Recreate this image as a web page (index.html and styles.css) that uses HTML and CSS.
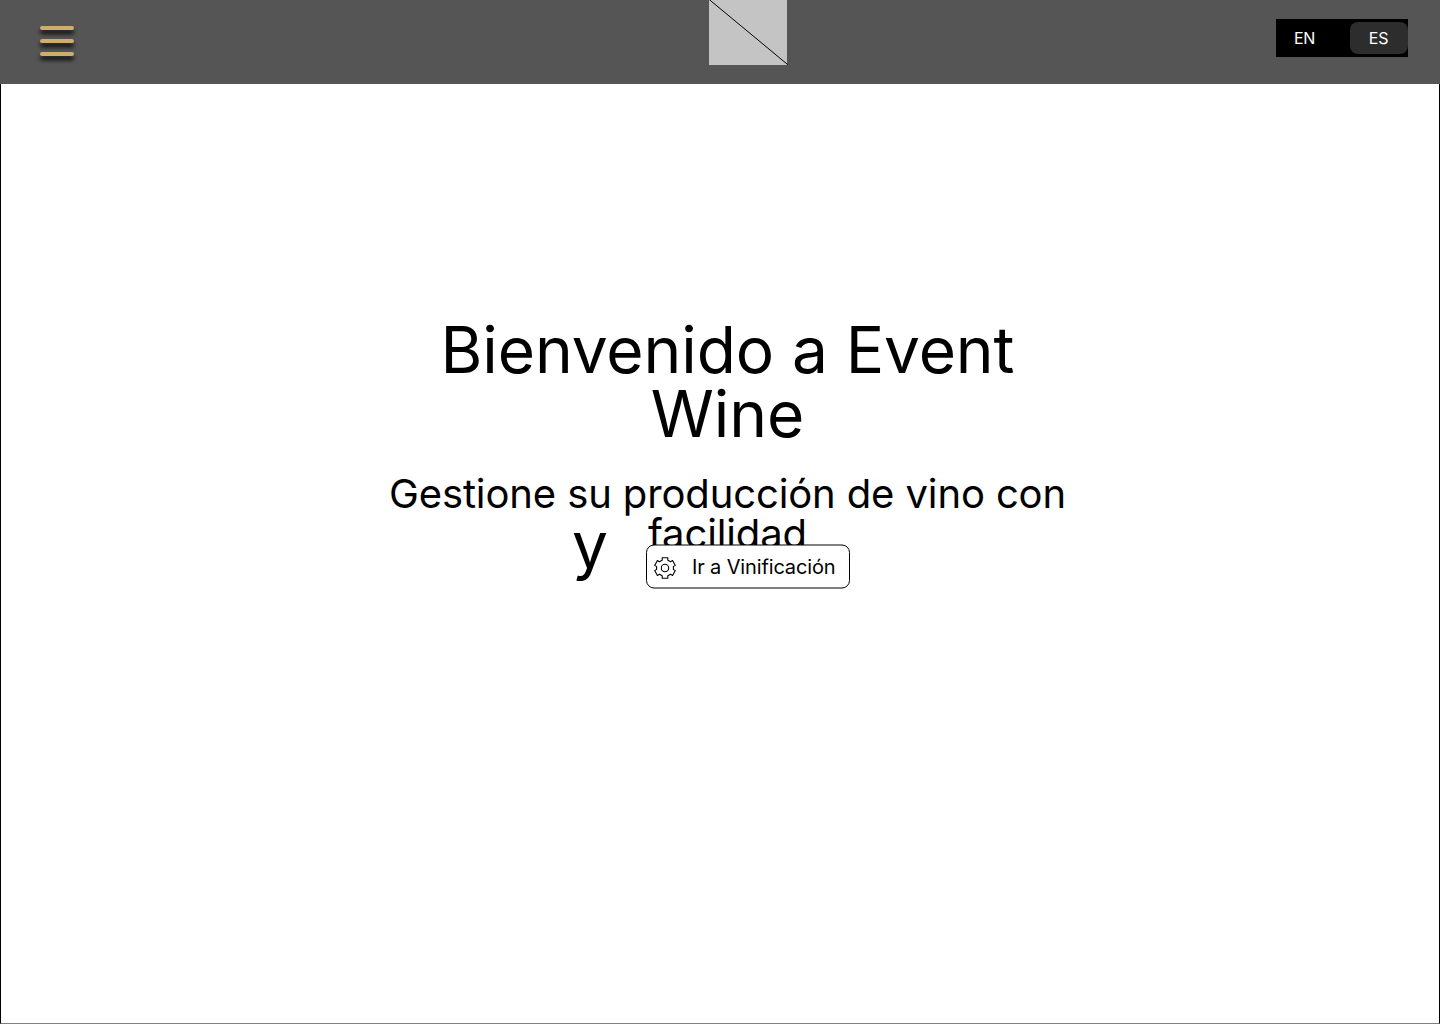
FILE: index.html
```html
<!DOCTYPE html>
<html lang="es">
<head>
<meta charset="utf-8">
<title>Event Wine</title>
<link rel="stylesheet" href="styles.css">
</head>
<body>
<div class="page">
  <header class="header">
    <button class="menu" aria-label="Menú"><span class="menu-bar"></span><span class="menu-bar"></span><span class="menu-bar"></span></button>
    <svg class="logo" width="79" height="65" viewBox="0 0 79 65"><rect width="78" height="65" fill="#c4c4c4"/><path d="M.3-.4 78.7 64.6" stroke="#000"/></svg>
    <nav class="lang"><a class="lang-item">EN</a><a class="lang-item lang-active">ES</a></nav>
  </header>
  <main class="hero">
    <h1 class="title">Bienvenido a Event Wine</h1>
    <p class="subtitle">Gestione su producción de vino con facilidad</p>
    <div class="actions">
      <span class="and">y</span>
      <button class="go">
        <svg class="go-frame" width="204" height="46" viewBox="0 0 204 46"><rect x=".5" y="2" width="203" height="43" rx="7.5" fill="#fff" stroke="#000"/></svg>
        <svg class="gear" width="22" height="22" viewBox="0 0 22 22" fill="none" stroke="#000" stroke-width="1.1" stroke-linejoin="round"><path d="M8.2.7h5.6v2.5q1.6.6 2.7 1.6l2.1-1.2 2.7 4.8-2 1.2q.3 1.4 0 2.8l2 1.2-2.7 4.8-2.1-1.2q-1.1 1-2.7 1.6v2.5H8.2v-2.5q-1.6-.6-2.7-1.6l-2.1 1.2-2.7-4.8 2-1.2q-.3-1.4 0-2.8l-2-1.2 2.7-4.8 2.1 1.2q1.1-1 2.7-1.6z"/><circle cx="11" cy="11" r="3.7"/></svg>
        <span class="go-label">Ir a Vinificación</span>
      </button>
    </div>
  </main>
</div>
</body>
</html>
```
FILE: styles.css
```css
* { box-sizing: border-box; }
body { margin: 0; background: #fff; color: #000; font-family: Inter, sans-serif; }
button { border: 0; padding: 0; background: none; font: inherit; color: inherit; }
.page {
  height: 1024px;
  border: 1px solid #000;
  border-top: 0;
  border-bottom-color: #808080;
}
.header {
  display: grid;
  grid-template-columns: 1fr 79px 1fr;
  height: 84px;
  margin: 0 -1px;
  background: #555;
}
.menu {
  display: flex;
  flex-direction: column;
  gap: 9px;
  width: 34px;
  height: 30px;
  margin: 26px 0 0 40px;
}
.menu-bar {
  height: 4px;
  border-radius: 2px;
  background: #d1ad6d;
  box-shadow: 0 4px 4px rgba(0, 0, 0, .9);
}
.logo { display: block; margin-left: 28.5px; }
.lang {
  display: flex;
  justify-content: space-between;
  align-items: center;
  justify-self: end;
  width: 132px;
  height: 38px;
  margin: 19px 32px 0 0;
  background: #000;
  color: #fff;
  font-size: 16px;
  font-weight: 400;
  letter-spacing: -.3px;
}
.lang-item {
  display: flex;
  align-items: center;
  justify-content: center;
  width: 58px;
  height: 32px;
  padding-right: 1px;
}
.lang-active { border-radius: 8px; background: #2d2d2d; }
.hero { padding: 234px 0 0 15px; text-align: center; }
.title {
  width: 640px;
  margin: 0 auto;
  font-size: 64px;
  line-height: 64px;
  font-weight: 400;
  letter-spacing: -.1px;
}
.subtitle {
  width: 700px;
  margin: 28px auto 0;
  font-size: 40px;
  line-height: 40px;
  letter-spacing: -.12px;
}
.actions {
  display: flex;
  gap: 41px;
  margin: -11px 0 0 556px;
}
.and { width: 33px; height: 64px; font-size: 64px; line-height: 64px; margin-top: -30px; }
.go {
  position: relative;
  display: flex;
  align-items: center;
  gap: 16px;
  width: 204px;
  height: 46px;
  padding-left: 8px;
}
.go-frame { position: absolute; left: 0; top: 0; }
.gear { position: relative; top: 2px; }
.go-label { position: relative; top: 1px; font-size: 20px; line-height: 24px; letter-spacing: -.14px; white-space: nowrap; }
```
